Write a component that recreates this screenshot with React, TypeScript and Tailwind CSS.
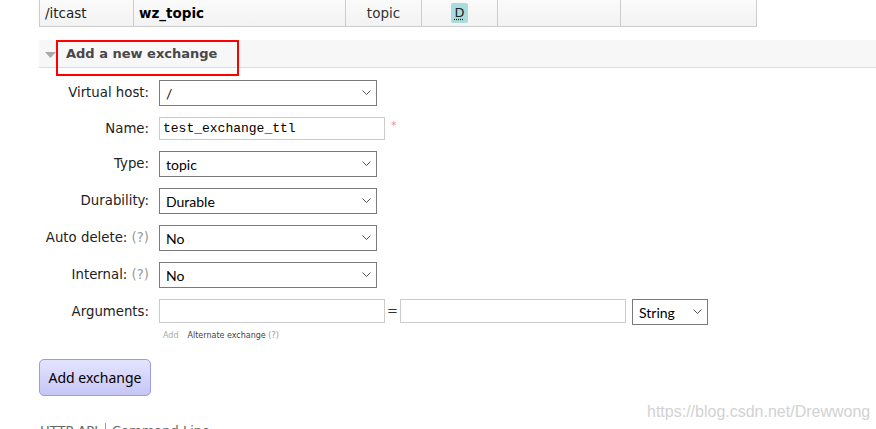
import React from 'react'

function Chevron() {
  return (
    <svg width="9" height="6" viewBox="0 0 9 6" className="shrink-0">
      <polyline points="0.5,0.5 4.5,4.5 8.5,0.5" fill="none" stroke="#555" strokeWidth="1" />
    </svg>
  )
}

function FakeSelect({ value, width }: { value: string; width: string }) {
  return (
    <div
      className={`flex h-[26px] ${width} items-center justify-between border border-[#7a7a7a] bg-white pl-[6px] pr-[5px] font-['Lato',sans-serif] text-[14px] text-black`}
    >
      <span>{value}</span>
      <Chevron />
    </div>
  )
}

function Help() {
  return <span className="text-[#999]"> (?)</span>
}

function Row({ label, children }: { label: React.ReactNode; children: React.ReactNode }) {
  return (
    <div className="flex items-center">
      <div className="w-[110px] whitespace-nowrap text-right text-[13.3px] text-[#222]">{label}</div>
      <div className="ml-[10px] flex items-start">{children}</div>
    </div>
  )
}

export default function App() {
  return (
    <div className="relative h-[429px] w-[876px] overflow-hidden bg-white font-['Verdana','DejaVu_Sans',sans-serif]">
      {/* exchanges table, last row */}
      <div className="pl-[39px]">
        <div className="flex h-[27px] w-[718px] border-b border-[#ccc] bg-gradient-to-b from-[#fbfbfb] to-[#f2f2f2] text-[13.5px] text-[#222]">
          <div className="flex w-[94px] items-center border-l border-[#ccc] pl-[5px]">/itcast</div>
          <div className="flex w-[212px] items-center border-l border-[#ccc] pl-[5px] font-bold text-black">wz_topic</div>
          <div className="flex w-[76px] items-center justify-center border-l border-[#ccc] text-[#333]">topic</div>
          <div className="flex w-[76px] items-center justify-center border-l border-[#ccc]">
            <span className="flex h-[20px] w-[17px] items-center justify-center rounded-[2px] bg-[#a9dcdc] text-[13px] text-[#222]">
              <span className="underline decoration-dotted underline-offset-2">D</span>
            </span>
          </div>
          <div className="w-[123px] border-l border-[#ccc]" />
          <div className="w-[137px] border-x border-[#ccc]" />
        </div>
      </div>

      {/* section header */}
      <div className="ml-[39px] mt-[13px] flex h-[28px] items-center border-b border-[#ddd] bg-[#f7f7f7] pl-[6px]">
        <svg width="11" height="6" viewBox="0 0 11 6" className="mt-[2px]">
          <polygon points="0,0 11,0 5.5,6" fill="#aaa" />
        </svg>
        <span className="ml-[10px] text-[13px] font-bold text-[#484848]">Add a new exchange</span>
      </div>

      {/* form */}
      <div className="mt-[12px] flex flex-col gap-[11px] pl-[39px]">
        <Row label="Virtual host:">
          <FakeSelect value="/" width="w-[218px]" />
        </Row>
        <Row label="Name:">
          <input
            readOnly
            value="test_exchange_ttl"
            className="h-[23px] w-[226px] border border-[#ccc] bg-white pl-[3px] font-['Liberation_Mono',monospace] text-[13px] text-black outline-none"
          />
          <span className="ml-[6px] mt-[3px] text-[11px] leading-none text-[#f88]">*</span>
        </Row>
        <Row label="Type:">
          <FakeSelect value="topic" width="w-[218px]" />
        </Row>
        <Row label="Durability:">
          <FakeSelect value="Durable" width="w-[218px]" />
        </Row>
        <Row label={<>Auto delete:<Help /></>}>
          <FakeSelect value="No" width="w-[218px]" />
        </Row>
        <Row label={<>Internal:<Help /></>}>
          <FakeSelect value="No" width="w-[218px]" />
        </Row>
        <div className="flex items-start">
          <div className="flex h-[26px] w-[110px] items-center justify-end text-[13.3px] text-[#222]">Arguments:</div>
          <div className="ml-[10px] flex items-start">
            <input readOnly className="h-[24px] w-[226px] border border-[#ccc] bg-white outline-none" />
            <span className="mx-[2px] flex h-[24px] w-[11px] items-center justify-center text-[13px] text-[#333]">=</span>
            <input readOnly className="h-[24px] w-[226px] border border-[#ccc] bg-white outline-none" />
            <div className="ml-[6px]">
              <FakeSelect value="String" width="w-[76px]" />
            </div>
          </div>
        </div>
      </div>

      <div className="mt-[5px] flex h-[12px] items-center pl-[163px] text-[8px]">
        <span className="text-[#aaa]">Add</span>
        <span className="ml-[9px] text-[#444]">Alternate exchange</span>
        <span className="text-[#999]">&nbsp;(?)</span>
      </div>

      <div className="ml-[39px] mt-[17px]">
        <button className="h-[37px] w-[112px] rounded-[5px] border border-[#9b9be0] bg-gradient-to-b from-[#e4e4ff] to-[#c6c6f6] font-['Noto_Sans',sans-serif] text-[14px] text-black">
          Add exchange
        </button>
      </div>

      {/* footer, cut by the window edge */}
      <div className="ml-[40px] mt-[27px] flex text-[13px] leading-[16px] text-[#666]">
        <span className="border-r border-[#999] pr-[7px]">HTTP API</span>
        <span className="pl-[6px]">Command Line</span>
      </div>

      {/* annotation + watermark */}
      <div className="absolute left-[56px] top-[40px] h-[36px] w-[183px] border-2 border-[#f00]" />
      <div className="absolute left-[647px] top-[400px] font-['Liberation_Sans',sans-serif] text-[16px] text-[#d2d2d2]">
        https://blog.csdn.net/Drewwong
      </div>
    </div>
  )
}
